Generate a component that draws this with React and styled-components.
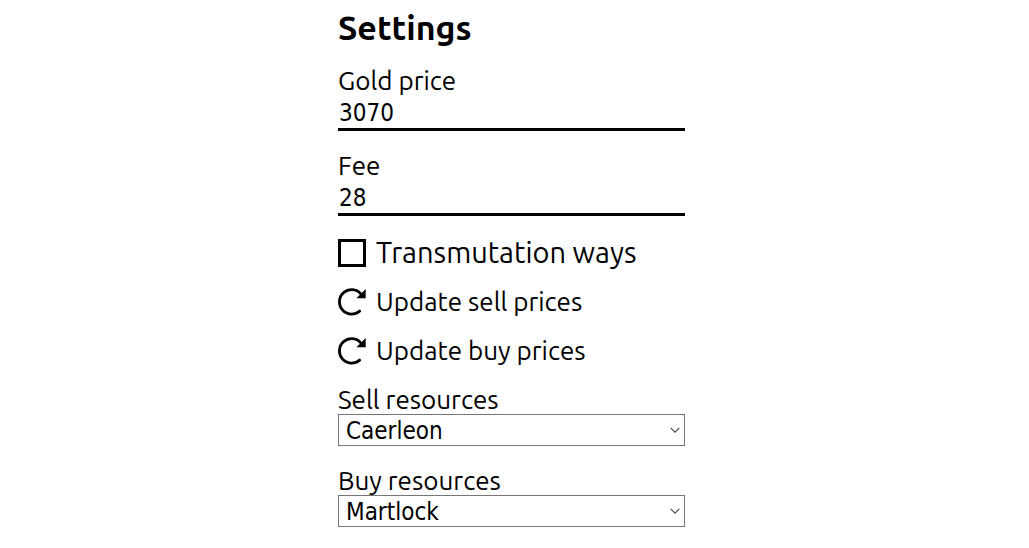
import React, { useState } from "react";
import styled, { createGlobalStyle } from "styled-components";

const GlobalStyle = createGlobalStyle`
  *, *::before, *::after { box-sizing: border-box; }
  body {
    margin: 0;
    background: #fff;
    color: #000;
    font-family: Ubuntu, "Noto Sans", sans-serif;
  }
`;

const Page = styled.main`
  display: flex;
  justify-content: center;
  padding: 8px 14px 8px 8px;
`;

const Panel = styled.form`
  display: flex;
  flex-direction: column;
  gap: 20px;
  width: 100%;
  max-width: 347px;
`;

const Title = styled.h1`
  margin: 0;
  font-size: 34px;
  line-height: 38px;
  font-weight: 700;
`;

const Field = styled.div`
  display: flex;
  flex-direction: column;
`;

const Label = styled.label`
  font-size: 26px;
  line-height: 29px;
`;

const TextInput = styled.input`
  width: 100%;
  height: 36px;
  padding: 2px 1px 0;
  border: 0;
  border-bottom: 3px solid #000;
  border-radius: 0;
  outline: 0;
  background: transparent;
  color: inherit;
  font-family: "DejaVu Sans Condensed", "Noto Sans", sans-serif;
  font-size: 24px;
`;

const CheckRow = styled.label`
  display: flex;
  align-items: flex-end;
  gap: 10px;
  height: 31px;
  font-size: 29px;
  line-height: 30px;
  white-space: nowrap;
  cursor: pointer;
`;

const Checkbox = styled.input`
  appearance: none;
  flex: none;
  width: 28px;
  height: 28px;
  margin: 0;
  border: 3px solid #000;
  background: #fff;
  cursor: pointer;

  &:checked {
    background: #000;
    box-shadow: inset 0 0 0 3px #fff;
  }
`;

const ActionButton = styled.button`
  display: flex;
  align-items: center;
  align-self: flex-start;
  gap: 10px;
  padding: 0;
  border: 0;
  background: none;
  color: inherit;
  font-family: inherit;
  font-size: 26px;
  line-height: 29px;
  white-space: nowrap;
  cursor: pointer;
`;

const Icon = styled.svg`
  display: block;
  flex: none;
  width: 28px;
  height: 28px;
`;

const SelectBox = styled.div`
  display: grid;
  align-items: center;

  & > * { grid-area: 1 / 1; }
`;

const Select = styled.select`
  appearance: none;
  width: 100%;
  height: 32px;
  padding: 2px 24px 0 7px;
  border: 1px solid #767676;
  border-radius: 0;
  background: #fff;
  color: inherit;
  font-family: "DejaVu Sans Condensed", "Noto Sans", sans-serif;
  font-size: 24px;
`;

const Chevron = styled.svg`
  justify-self: end;
  width: 10px;
  height: 6px;
  margin-right: 5px;
  pointer-events: none;
`;

const CITIES = ["Caerleon", "Martlock", "Bridgewatch", "Lymhurst", "Thetford", "Fort Sterling"];

function NumberField({ id, label, initial }) {
  const [value, setValue] = useState(initial);
  return (
    <Field>
      <Label htmlFor={id}>{label}</Label>
      <TextInput
        id={id}
        type="text"
        inputMode="numeric"
        value={value}
        onChange={(e) => setValue(e.target.value)}
      />
    </Field>
  );
}

function CityField({ id, label, initial }) {
  return (
    <Field>
      <Label htmlFor={id}>{label}</Label>
      <SelectBox>
        <Select id={id} defaultValue={initial}>
          {CITIES.map((city) => (
            <option key={city}>{city}</option>
          ))}
        </Select>
        <Chevron viewBox="0 0 10 6" aria-hidden="true">
          <path d="M.7.8 5 5.1 9.3.8" fill="none" stroke="#444" strokeWidth="1.1" />
        </Chevron>
      </SelectBox>
    </Field>
  );
}

function UpdateAction({ children }) {
  return (
    <ActionButton type="button">
      <Icon viewBox="0 0 28 28" aria-hidden="true">
        <path
          d="M21.6 23.1A12.2 12.2 0 1 1 22.8 5.8"
          fill="none"
          stroke="#000"
          strokeWidth="2.8"
          strokeLinecap="round"
        />
        <path d="M27.7 1V10.2H18.4Z" />
      </Icon>
      {children}
    </ActionButton>
  );
}

export default function App() {
  return (
    <>
      <GlobalStyle />
      <Page>
        <Panel>
          <Title>Settings</Title>
          <NumberField id="gold-price" label="Gold price" initial="3070" />
          <NumberField id="fee" label="Fee" initial="28" />
          <CheckRow>
            <Checkbox type="checkbox" />
            Transmutation ways
          </CheckRow>
          <UpdateAction>Update sell prices</UpdateAction>
          <UpdateAction>Update buy prices</UpdateAction>
          <CityField id="sell-resources" label="Sell resources" initial="Caerleon" />
          <CityField id="buy-resources" label="Buy resources" initial="Martlock" />
        </Panel>
      </Page>
    </>
  );
}
